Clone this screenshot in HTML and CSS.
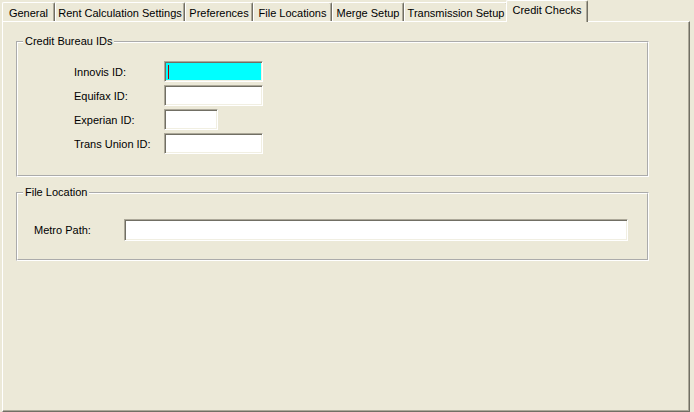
FILE: index.html
```html
<!DOCTYPE html>
<html lang="en">
<head>
    <meta charset="UTF-8">
    <title>Credit Checks</title>
    <link rel="stylesheet" href="styles.css">
</head>
<body>
    <div class="tabs">
        <div class="tab" style="width: 53px">General</div>
        <div class="tab" style="width: 130px">Rent Calculation Settings</div>
        <div class="tab" style="width: 68px">Preferences</div>
        <div class="tab" style="width: 79px">File Locations</div>
        <div class="tab" style="width: 72px">Merge Setup</div>
        <div class="tab" style="width: 104px">Transmission Setup</div>
        <div class="tab active" style="width: 82px">Credit Checks</div>
    </div>

    <div class="panel">
        <fieldset class="group bureau">
            <legend>Credit Bureau IDs</legend>
            <div class="rows">
                <div class="row">
                    <span class="label">Innovis ID:</span>
                    <div class="field focused"><span class="caret"></span></div>
                </div>
                <div class="row">
                    <span class="label">Equifax ID:</span>
                    <div class="field"></div>
                </div>
                <div class="row">
                    <span class="label">Experian ID:</span>
                    <div class="field short"></div>
                </div>
                <div class="row">
                    <span class="label">Trans Union ID:</span>
                    <div class="field"></div>
                </div>
            </div>
        </fieldset>

        <fieldset class="group location">
            <legend>File Location</legend>
            <div class="rows">
                <div class="row">
                    <span class="label">Metro Path:</span>
                    <div class="field path"></div>
                </div>
            </div>
        </fieldset>
    </div>
</body>
</html>
```

FILE: styles.css
```css
body {
    margin: 0;
    width: 694px;
    height: 412px;
    overflow: hidden;
    background-color: #ece9d8;
    font-family: "Liberation Sans", Arial, sans-serif;
    font-size: 11px;
    color: #000000;
}
.tabs {
    display: flex;
    align-items: flex-end;
    height: 21px;
    padding-left: 2px;
}
.tab {
    box-sizing: border-box;
    height: 19px;
    padding-top: 4px;
    text-align: center;
    white-space: nowrap;
    border-top: 1px solid #ffffff;
    border-left: 1px solid #ffffff;
    border-right: 1px solid #716f64;
    border-top-left-radius: 2px;
    border-top-right-radius: 2px;
    box-shadow: inset -1px 0 #aca899;
}
.tab.active {
    position: relative;
    z-index: 1;
    height: 22px;
    margin: 0 -2px -1px -2px;
    padding-top: 3px;
    background-color: #ece9d8;
}
.panel {
    box-sizing: border-box;
    width: 688px;
    height: 391px;
    margin-left: 2px;
    padding: 13px 0 0 13px;
    border-top: 1px solid #ffffff;
    border-left: 1px solid #ffffff;
    border-right: 1px solid #716f64;
    border-bottom: 1px solid #716f64;
    box-shadow: inset -1px -1px #aca899;
}
.group {
    box-sizing: border-box;
    width: 633px;
    margin: 0;
    padding: 0;
    border: 2px groove #ffffff;
}
.group legend {
    margin-left: 5px;
    padding: 0 2px;
    line-height: 13px;
}
.bureau .rows {
    display: flex;
    flex-direction: column;
    gap: 3px;
    padding: 13px 0 21px 56px;
}
.location {
    margin-top: 9px;
}
.location .rows {
    padding: 20px 0 18px 16px;
}
.row {
    display: flex;
    align-items: center;
}
.label {
    width: 90px;
}
.field {
    box-sizing: border-box;
    width: 99px;
    height: 21px;
    padding: 3px 0 0 3px;
    background-color: #ffffff;
    border-top: 1px solid #aca899;
    border-left: 1px solid #aca899;
    border-bottom: 1px solid #ffffff;
    border-right: 1px solid #ffffff;
    box-shadow: inset 1px 1px #716f64, inset -1px -1px #f1efe2;
}
.field.focused {
    background-color: #00ffff;
}
.field.short {
    width: 54px;
}
.field.path {
    width: 504px;
    height: 22px;
}
.caret {
    display: block;
    width: 1px;
    height: 14px;
    background-color: #b00000;
}
```
